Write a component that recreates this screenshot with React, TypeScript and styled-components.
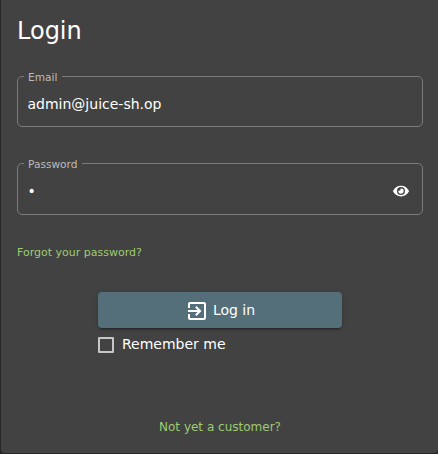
import React from "react";
import styled, { createGlobalStyle } from "styled-components";
import { FaEye } from "react-icons/fa";

const GlobalStyle = createGlobalStyle`
  * { box-sizing: border-box; }
  body {
    margin: 0;
    background: #272727;
    font-family: "DejaVu Sans", sans-serif;
    color: #fff;
    overflow: hidden;
  }
`;

const Card = styled.main`
  display: flex;
  flex-direction: column;
  width: 437px;
  height: 453px;
  margin-left: 1px;
  padding: 15px 15px 0 16px;
  background: #424242;
  border-radius: 0 0 4px 4px;
`;

const Title = styled.h1`
  margin: 0;
  height: 32px;
  font-size: 24px;
  line-height: 32px;
  font-weight: 400;
`;

const Form = styled.form`
  display: flex;
  flex-direction: column;
`;

const Field = styled.fieldset<{ $top: number; $height: number }>`
  display: block;
  min-width: 0;
  height: ${(p) => p.$height}px;
  margin: ${(p) => p.$top}px 0 0;
  padding: 0 13px 0 6px;
  border: 1px solid #7b7b7b;
  border-radius: 5px;
`;

const Legend = styled.legend`
  height: 1px;
  padding: 0 5px 0 4px;
  font-size: 10.6px;
  line-height: 3px;
  color: #bcbcbc;
`;

const FieldBody = styled.div<{ $height: number }>`
  display: flex;
  align-items: center;
  height: ${(p) => p.$height}px;
  padding: 4px 0 0 3.5px;
`;

const Input = styled.input`
  flex: 1;
  min-width: 0;
  height: 22px;
  padding: 0;
  border: 0;
  outline: 0;
  background: transparent;
  color: #fff;
  font: 14px "DejaVu Sans", sans-serif;
`;

const IconButton = styled.button`
  display: flex;
  padding: 0;
  border: 0;
  background: transparent;
  color: #fff;
`;

const EyeIcon = styled(FaEye)`
  width: 16px;
  height: 14.2px;
`;

const Link = styled.a<{ $size: number }>`
  font-size: ${(p) => p.$size}px;
  line-height: 16px;
  color: #9fcb72;
  text-decoration: none;
`;

const ForgotRow = styled.div`
  display: flex;
  margin-top: 30px;
`;

const Actions = styled.div`
  display: flex;
  flex-direction: column;
  width: 244px;
  margin: 31px 0 0 81px;
`;

const SubmitButton = styled.button`
  display: flex;
  align-items: center;
  justify-content: center;
  gap: 4px;
  height: 36px;
  padding: 0;
  border: 0;
  border-radius: 4px;
  background: #546e7a;
  color: #fff;
  font: 14px "DejaVu Sans", sans-serif;
  box-shadow: 0 3px 1px -2px rgba(0, 0, 0, 0.2), 0 2px 2px rgba(0, 0, 0, 0.14),
    0 1px 5px rgba(0, 0, 0, 0.12);

  svg {
    margin-top: 1px;
  }
`;

const Remember = styled.label`
  display: flex;
  align-items: center;
  gap: 8px;
  height: 20px;
  margin-top: 6px;
  font-size: 14px;
  line-height: 18px;
`;

const Checkbox = styled.input`
  appearance: none;
  width: 16px;
  height: 16px;
  margin: 2px 0 0;
  border: 2px solid #c6c6c6;
  border-radius: 1px;
`;

const Footer = styled.footer`
  display: flex;
  justify-content: center;
  margin-top: 65px;
`;

const EnterIcon = () => (
  <svg width="24" height="24" viewBox="0 0 24 24" fill="currentColor">
    <path d="M10.09 15.59L11.5 17l5-5-5-5-1.41 1.41L12.67 11H3v2h9.67l-2.58 2.59zM19 3H5c-1.11 0-2 .9-2 2v4h2V5h14v14H5v-4H3v4c0 1.1.89 2 2 2h14c1.1 0 2-.9 2-2V5c0-1.1-.9-2-2-2z" />
  </svg>
);

export default function App() {
  return (
    <>
      <GlobalStyle />
      <Card>
        <Title>Login</Title>
        <Form onSubmit={(e) => e.preventDefault()}>
          <Field $top={29} $height={51}>
            <Legend>Email</Legend>
            <FieldBody $height={49}>
              <Input type="text" aria-label="Email" defaultValue="admin@juice-sh.op" />
            </FieldBody>
          </Field>
          <Field $top={36} $height={52}>
            <Legend>Password</Legend>
            <FieldBody $height={50.5}>
              <Input type="password" aria-label="Password" defaultValue="1" />
              <IconButton type="button" aria-label="Show password">
                <EyeIcon />
              </IconButton>
            </FieldBody>
          </Field>
          <ForgotRow>
            <Link $size={11}>Forgot your password?</Link>
          </ForgotRow>
          <Actions>
            <SubmitButton type="submit">
              <EnterIcon />
              <span>Log in</span>
            </SubmitButton>
            <Remember>
              <Checkbox type="checkbox" />
              <span>Remember me</span>
            </Remember>
          </Actions>
        </Form>
        <Footer>
          <Link $size={12}>Not yet a customer?</Link>
        </Footer>
      </Card>
    </>
  );
}
